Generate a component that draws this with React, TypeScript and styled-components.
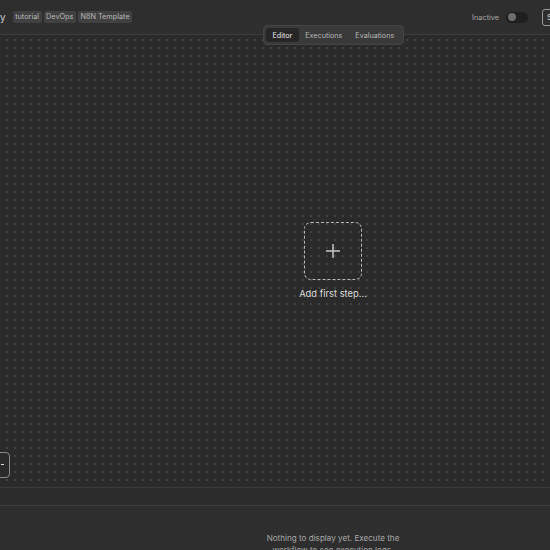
import React from "react";
import styled, { createGlobalStyle } from "styled-components";

const Global = createGlobalStyle`
  html, body { margin: 0; padding: 0; background: #2a2a2a; }
  body { font-family: Inter, "Noto Sans", sans-serif; overflow: hidden; }
  #root { width: 550px; height: 550px; }
`;

const Page = styled.div`
  width: 550px;
  height: 550px;
  display: grid;
  grid-template-rows: 35px 1fr 18px 44px;
  overflow: hidden;
  position: relative;
`;

const Header = styled.header`
  background: #2e2e2e;
  border-bottom: 1px solid #3d3d3d;
  display: flex;
  align-items: center;
  gap: 2px;
  position: relative;
`;

const Name = styled.span`
  color: #c8c8c8;
  font-size: 10px;
  margin-left: 0;
  margin-right: 5px;
`;

const Tag = styled.span`
  background: #414141;
  color: #b8b8b8;
  font-size: 7.3px;
  line-height: 12px;
  padding: 0 2.5px;
  border-radius: 2px;
`;

const Spacer = styled.div`
  flex: 1;
`;

const Status = styled.span`
  color: #a8a8a8;
  font-size: 7.3px;
  margin-right: 5px;
`;

const Track = styled.div`
  width: 22px;
  height: 11px;
  border-radius: 6px;
  background: #1f1f1f;
  position: relative;
  margin-right: 12px;
`;

const Knob = styled.div`
  position: absolute;
  left: 2px;
  top: 1.5px;
  width: 8px;
  height: 8px;
  border-radius: 50%;
  background: #6e6e6e;
`;

const SaveBtn = styled.button`
  width: 20px;
  height: 17px;
  border: 1px solid #9a9a9a;
  border-radius: 3px;
  background: #2e2e2e;
  color: #d0d0d0;
  font-size: 8px;
  font-family: inherit;
  padding: 0 0 0 4px;
  text-align: left;
  flex: none;
  margin-right: -12px;
`;

const Tabs = styled.div`
  position: absolute;
  left: 263px;
  top: 25px;
  height: 20px;
  width: 141px;
  box-sizing: border-box;
  padding: 2px;
  background: #3a3a3a;
  border: 1px solid #444;
  border-radius: 4px;
  display: flex;
  align-items: stretch;
  gap: 0;
  z-index: 2;
`;

const Tab = styled.div<{ $active?: boolean }>`
  font-size: 7.2px;
  color: ${(p) => (p.$active ? "#e8e8e8" : "#b8b8b8")};
  background: ${(p) => (p.$active ? "#262626" : "transparent")};
  border-radius: 3px;
  padding: 0 6.5px;
  display: flex;
  align-items: center;
`;

const Canvas = styled.main`
  background-color: #2a2a2a;
  background-image: radial-gradient(circle, #444 0.7px, transparent 0.8px);
  background-size: 8px 8px;
  background-position: 3px 1px;
  display: flex;
  flex-direction: column;
  align-items: center;
  padding-top: 187px;
  position: relative;
  border-bottom: 1px solid #3a3a3a;
`;

const AddBox = styled.div`
  width: 58px;
  height: 58px;
  box-sizing: border-box;
  border: 1.5px dashed #b8b8b8;
  border-radius: 7px;
  display: flex;
  align-items: center;
  justify-content: center;
  margin-left: 116px;
`;

const AddLabel = styled.div`
  color: #dcdcdc;
  font-size: 9.4px;
  margin-top: 8px;
  margin-left: 116px;
`;

const SideBtn = styled.div`
  position: absolute;
  left: -16px;
  top: 417px;
  width: 24px;
  height: 24px;
  border: 1px solid #8a8a8a;
  border-radius: 4px;
  background: #2a2a2a;
`;

const SideDot = styled.div`
  position: absolute;
  right: 5px;
  top: 11px;
  width: 3px;
  height: 1px;
  background: #ddd;
`;

const LogsBar = styled.div`
  background: #2c2c2c;
  border-bottom: 1px solid #3c3c3c;
`;

const Logs = styled.section`
  background: #2e2e2e;
  display: flex;
  justify-content: center;
  padding-top: 26px;
  padding-left: 116px;
`;

const LogsText = styled.p`
  margin: 0;
  color: #a8a8a8;
  font-size: 8.1px;
  line-height: 12px;
  text-align: center;
  width: 140px;
`;

export default function App() {
  return (
    <>
      <Global />
      <Page>
        <Header>
          <Name>y</Name>
          <Tag>tutorial</Tag>
          <Tag>DevOps</Tag>
          <Tag>N8N Template</Tag>
          <Spacer />
          <Status>Inactive</Status>
          <Track>
            <Knob />
          </Track>
          <SaveBtn>S</SaveBtn>
          <Tabs>
            <Tab $active>Editor</Tab>
            <Tab>Executions</Tab>
            <Tab>Evaluations</Tab>
          </Tabs>
        </Header>
        <Canvas>
          <AddBox>
            <svg width="16" height="16" viewBox="0 0 16 16">
              <path d="M8 1v14M1 8h14" stroke="#c8c8c8" strokeWidth="1.5" />
            </svg>
          </AddBox>
          <AddLabel>Add first step...</AddLabel>
          <SideBtn>
            <SideDot />
          </SideBtn>
        </Canvas>
        <LogsBar />
        <Logs>
          <LogsText>Nothing to display yet. Execute the workflow to see execution logs.</LogsText>
        </Logs>
      </Page>
    </>
  );
}
